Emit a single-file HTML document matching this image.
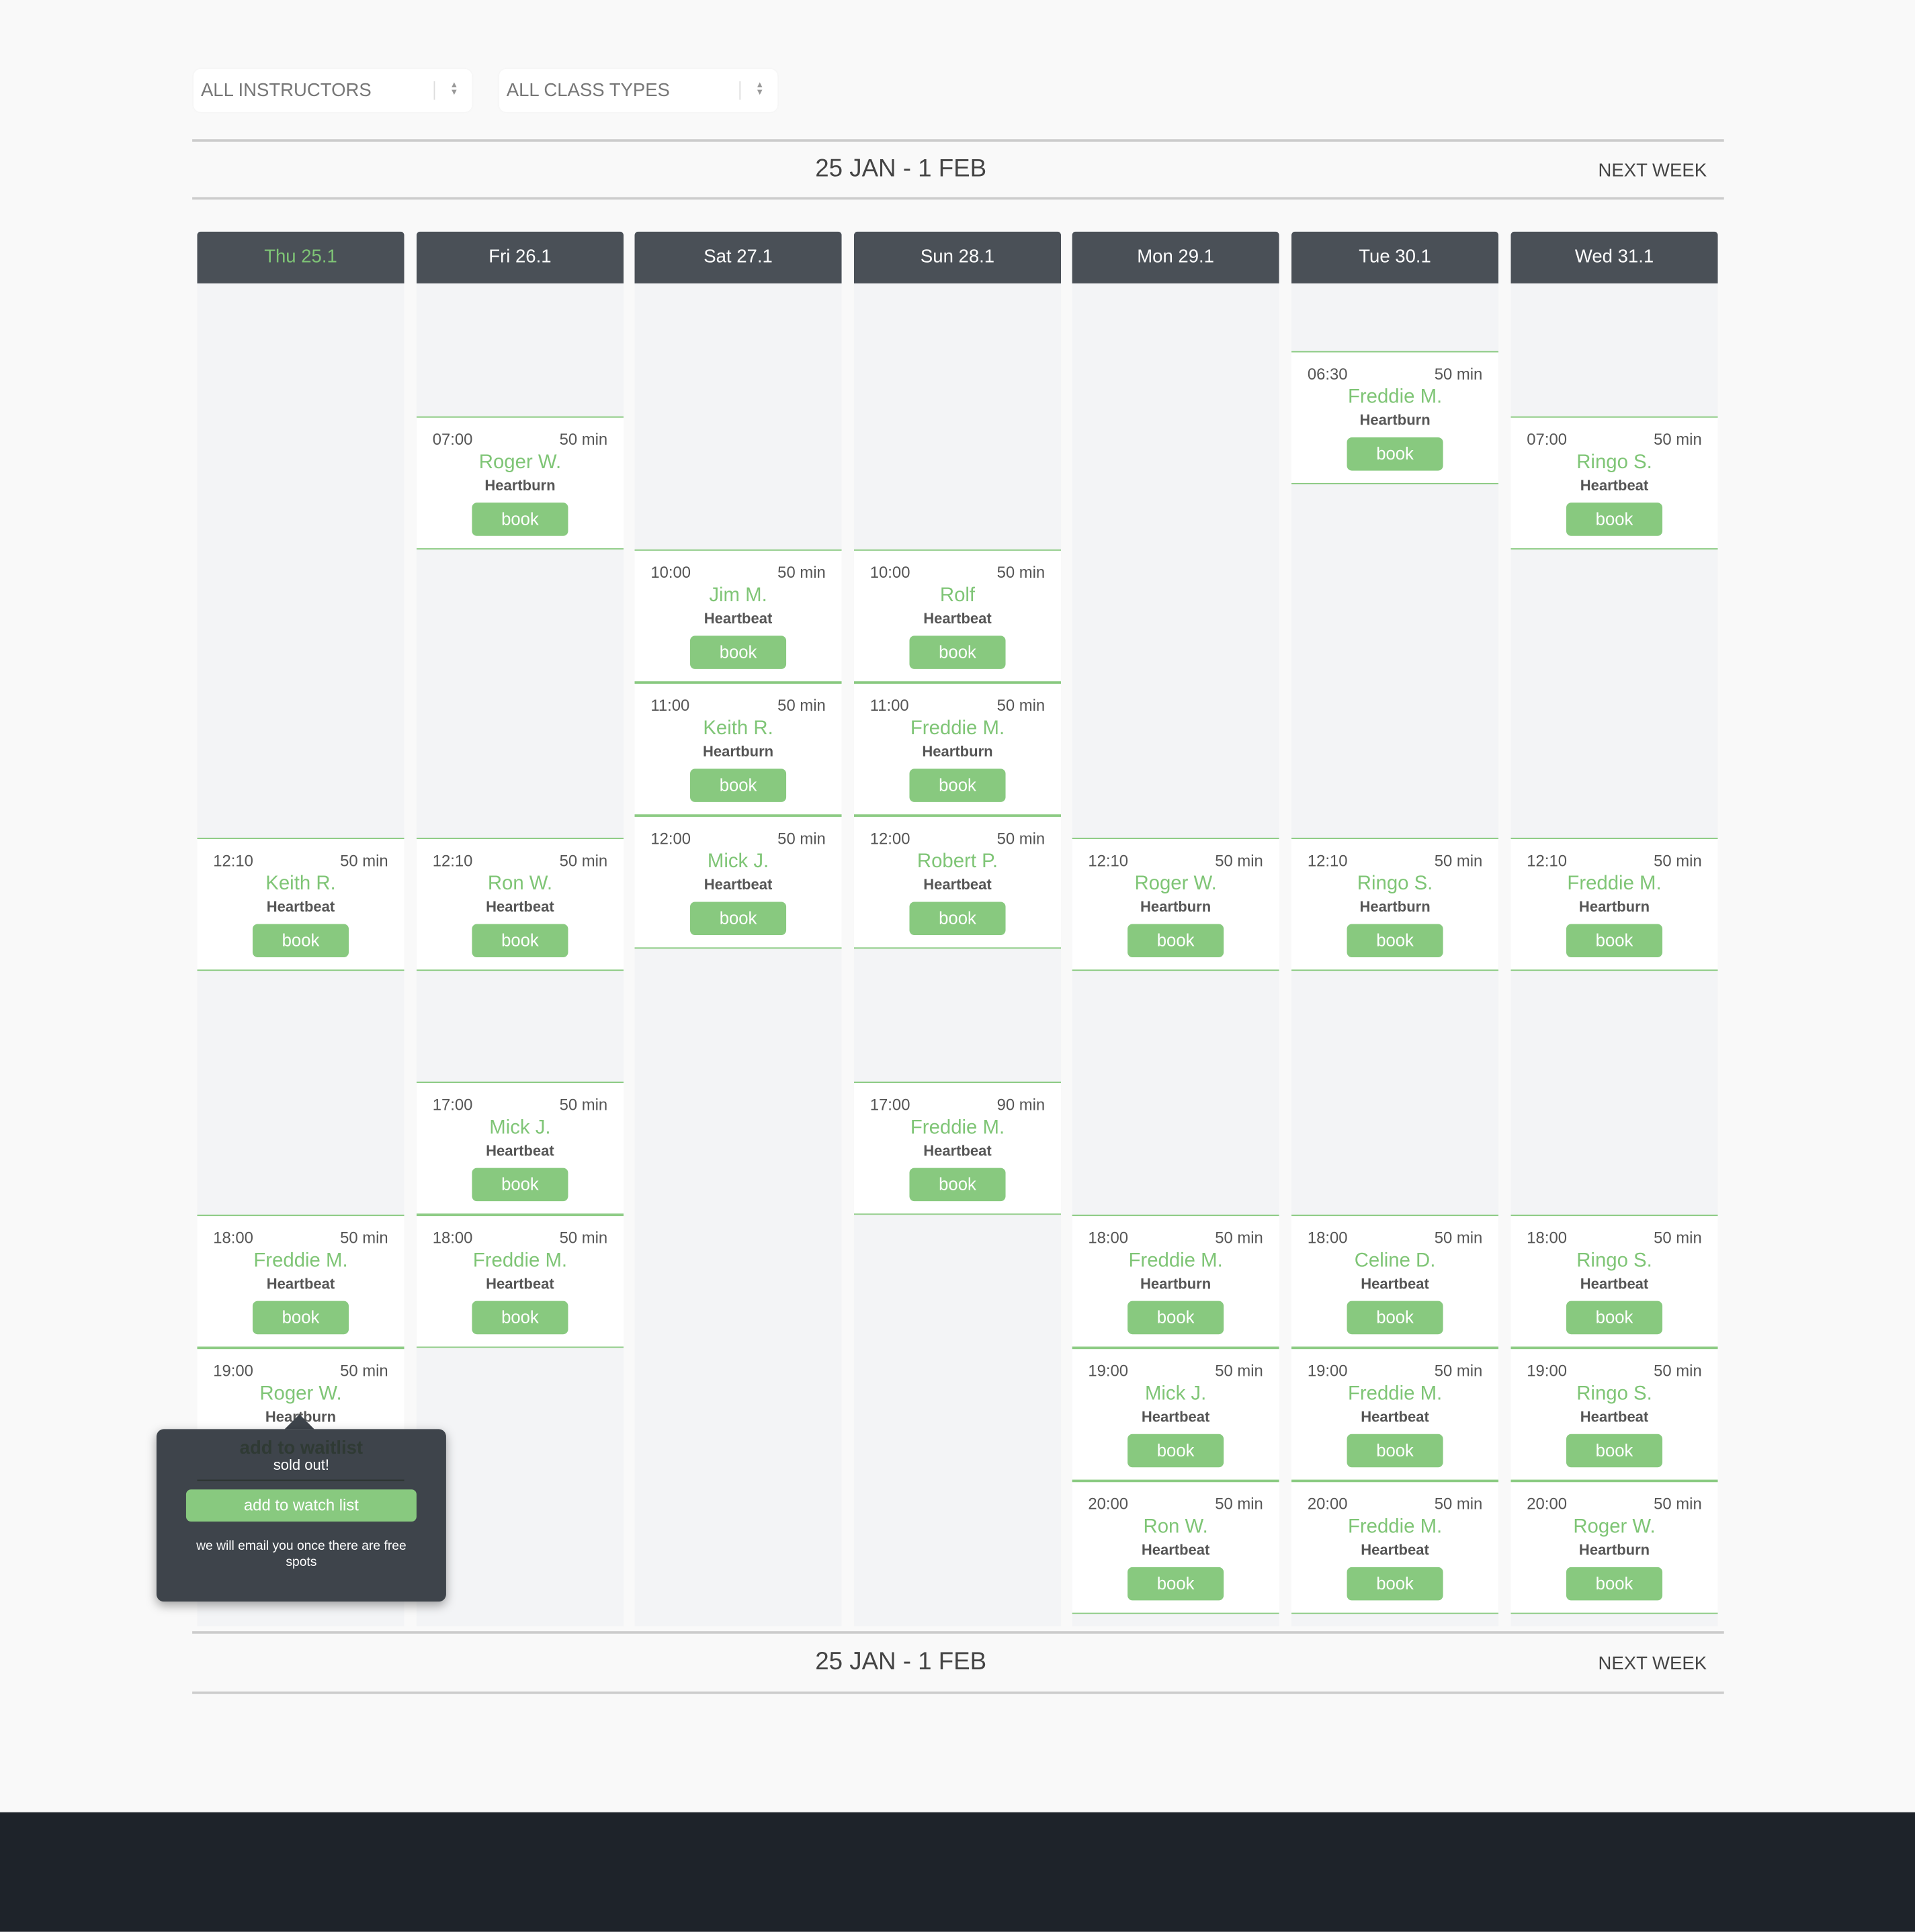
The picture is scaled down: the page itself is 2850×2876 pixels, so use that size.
<!DOCTYPE html>
<html><head><meta charset="utf-8">
<style>
html,body{margin:0;padding:0;width:2850px;height:2876px;overflow:hidden;background:#f9f9f9;font-family:"Liberation Sans",Arial,sans-serif}
#w{position:absolute;left:0;top:0;width:1554px;height:1568px;transform:scale(1.83398);transform-origin:0 0;}
.sel{position:absolute;top:56px;height:35px;width:226px;background:#fff;border-radius:6px;box-shadow:0 0 2px rgba(0,0,0,.04);}
.sel span{position:absolute;left:6px;top:9px;font-size:15px;color:#777;}
.sel i{position:absolute;right:30px;top:10px;width:1px;height:15px;background:#ddd}
.sel b{position:absolute;right:11px;top:11px;font-size:7px;line-height:6px;color:#999;font-weight:normal}
.hl{position:absolute;left:156px;width:1243px;height:1.5px;background:#ccc}
.dt{position:absolute;left:0;width:1462px;text-align:center;font-size:20px;color:#444}
.nw{position:absolute;right:169px;font-size:15px;color:#444}
.col{position:absolute;top:188px;width:168px;height:1132px;background:#f3f4f6;border-radius:3px 3px 0 0;overflow:hidden}
.col .h{height:42px;background:#4a5057;color:#fff;font-size:15px;text-align:center;line-height:42px}
.c{position:absolute;width:168px;height:106px;background:#fff;border-top:1.3px solid #88c97f;border-bottom:1.3px solid #88c97f}
.c .t{position:absolute;left:13px;top:10px;font-size:13px;color:#555}
.c .d{position:absolute;right:13px;top:10px;font-size:13px;color:#555}
.c .n{position:absolute;left:0;right:0;top:28px;text-align:center;font-size:16px;color:#7fc576}
.c .k{position:absolute;left:0;right:0;top:48px;text-align:center;font-size:12px;font-weight:bold;color:#555}
.c .b{position:absolute;left:45px;top:69px;width:78px;height:27px;border-radius:4px;background:#88c97f;color:#fff;font-size:14px;text-align:center;line-height:27px}
#foot{position:absolute;left:0;top:1471px;width:1554px;height:97px;background:#1e232a}
#tip{position:absolute;left:127px;top:1160px;width:235px;height:140px;background:#3e444b;border-radius:6px;box-shadow:0 3px 8px rgba(0,0,0,.35)}
#arr{position:absolute;left:231px;top:1148px;width:0;height:0;border-left:12px solid transparent;border-right:12px solid transparent;border-bottom:12px solid #3e444b}
</style></head><body><div id="w">
<div class="sel" style="left:157px"><span>ALL INSTRUCTORS</span><i></i><b>▲<br>▼</b></div>
<div class="sel" style="left:405px"><span>ALL CLASS TYPES</span><i></i><b>▲<br>▼</b></div>
<div class="hl" style="top:113px"></div><div class="hl" style="top:160px"></div>
<div class="dt" style="top:126px">25 JAN - 1 FEB</div><div class="nw" style="top:130px">NEXT WEEK</div>

<div class="col" style="left:160px"><div class="h" style="color:#7fc576">Thu 25.1</div>
<div class="c" style="top:492px"><span class="t">12:10</span><span class="d">50 min</span><div class="n">Keith R.</div><div class="k">Heartbeat</div><div class="b">book</div></div>
<div class="c" style="top:798px"><span class="t">18:00</span><span class="d">50 min</span><div class="n">Freddie M.</div><div class="k">Heartbeat</div><div class="b">book</div></div>
<div class="c" style="top:906px"><span class="t">19:00</span><span class="d">50 min</span><div class="n">Roger W.</div><div class="k">Heartburn</div></div>
</div>
<div class="col" style="left:338px"><div class="h">Fri 26.1</div>
<div class="c" style="top:150px"><span class="t">07:00</span><span class="d">50 min</span><div class="n">Roger W.</div><div class="k">Heartburn</div><div class="b">book</div></div>
<div class="c" style="top:492px"><span class="t">12:10</span><span class="d">50 min</span><div class="n">Ron W.</div><div class="k">Heartbeat</div><div class="b">book</div></div>
<div class="c" style="top:690px"><span class="t">17:00</span><span class="d">50 min</span><div class="n">Mick J.</div><div class="k">Heartbeat</div><div class="b">book</div></div>
<div class="c" style="top:798px"><span class="t">18:00</span><span class="d">50 min</span><div class="n">Freddie M.</div><div class="k">Heartbeat</div><div class="b">book</div></div>
</div>
<div class="col" style="left:515px"><div class="h">Sat 27.1</div>
<div class="c" style="top:258px"><span class="t">10:00</span><span class="d">50 min</span><div class="n">Jim M.</div><div class="k">Heartbeat</div><div class="b">book</div></div>
<div class="c" style="top:366px"><span class="t">11:00</span><span class="d">50 min</span><div class="n">Keith R.</div><div class="k">Heartburn</div><div class="b">book</div></div>
<div class="c" style="top:474px"><span class="t">12:00</span><span class="d">50 min</span><div class="n">Mick J.</div><div class="k">Heartbeat</div><div class="b">book</div></div>
</div>
<div class="col" style="left:693px"><div class="h">Sun 28.1</div>
<div class="c" style="top:258px"><span class="t">10:00</span><span class="d">50 min</span><div class="n">Rolf</div><div class="k">Heartbeat</div><div class="b">book</div></div>
<div class="c" style="top:366px"><span class="t">11:00</span><span class="d">50 min</span><div class="n">Freddie M.</div><div class="k">Heartburn</div><div class="b">book</div></div>
<div class="c" style="top:474px"><span class="t">12:00</span><span class="d">50 min</span><div class="n">Robert P.</div><div class="k">Heartbeat</div><div class="b">book</div></div>
<div class="c" style="top:690px"><span class="t">17:00</span><span class="d">90 min</span><div class="n">Freddie M.</div><div class="k">Heartbeat</div><div class="b">book</div></div>
</div>
<div class="col" style="left:870px"><div class="h">Mon 29.1</div>
<div class="c" style="top:492px"><span class="t">12:10</span><span class="d">50 min</span><div class="n">Roger W.</div><div class="k">Heartburn</div><div class="b">book</div></div>
<div class="c" style="top:798px"><span class="t">18:00</span><span class="d">50 min</span><div class="n">Freddie M.</div><div class="k">Heartburn</div><div class="b">book</div></div>
<div class="c" style="top:906px"><span class="t">19:00</span><span class="d">50 min</span><div class="n">Mick J.</div><div class="k">Heartbeat</div><div class="b">book</div></div>
<div class="c" style="top:1014px"><span class="t">20:00</span><span class="d">50 min</span><div class="n">Ron W.</div><div class="k">Heartbeat</div><div class="b">book</div></div>
</div>
<div class="col" style="left:1048px"><div class="h">Tue 30.1</div>
<div class="c" style="top:97px"><span class="t">06:30</span><span class="d">50 min</span><div class="n">Freddie M.</div><div class="k">Heartburn</div><div class="b">book</div></div>
<div class="c" style="top:492px"><span class="t">12:10</span><span class="d">50 min</span><div class="n">Ringo S.</div><div class="k">Heartburn</div><div class="b">book</div></div>
<div class="c" style="top:798px"><span class="t">18:00</span><span class="d">50 min</span><div class="n">Celine D.</div><div class="k">Heartbeat</div><div class="b">book</div></div>
<div class="c" style="top:906px"><span class="t">19:00</span><span class="d">50 min</span><div class="n">Freddie M.</div><div class="k">Heartbeat</div><div class="b">book</div></div>
<div class="c" style="top:1014px"><span class="t">20:00</span><span class="d">50 min</span><div class="n">Freddie M.</div><div class="k">Heartbeat</div><div class="b">book</div></div>
</div>
<div class="col" style="left:1226px"><div class="h">Wed 31.1</div>
<div class="c" style="top:150px"><span class="t">07:00</span><span class="d">50 min</span><div class="n">Ringo S.</div><div class="k">Heartbeat</div><div class="b">book</div></div>
<div class="c" style="top:492px"><span class="t">12:10</span><span class="d">50 min</span><div class="n">Freddie M.</div><div class="k">Heartburn</div><div class="b">book</div></div>
<div class="c" style="top:798px"><span class="t">18:00</span><span class="d">50 min</span><div class="n">Ringo S.</div><div class="k">Heartbeat</div><div class="b">book</div></div>
<div class="c" style="top:906px"><span class="t">19:00</span><span class="d">50 min</span><div class="n">Ringo S.</div><div class="k">Heartbeat</div><div class="b">book</div></div>
<div class="c" style="top:1014px"><span class="t">20:00</span><span class="d">50 min</span><div class="n">Roger W.</div><div class="k">Heartburn</div><div class="b">book</div></div>
</div>

<div class="hl" style="top:1324px"></div><div class="hl" style="top:1373px"></div>
<div class="dt" style="top:1338px">25 JAN - 1 FEB</div><div class="nw" style="top:1342px">NEXT WEEK</div>

<div id="arr"></div>
<div id="tip">
<div style="position:absolute;left:0;right:0;top:7px;text-align:center;font-size:15px;font-weight:bold;color:#2f3a34">add to waitlist</div>
<div style="position:absolute;left:0;right:0;top:22px;text-align:center;font-size:12px;color:#fff">sold out!</div>
<div style="position:absolute;left:33px;width:168px;top:41px;height:1px;background:#2a332e"></div>
<div style="position:absolute;left:24px;width:187px;top:49px;height:26px;background:#88c97f;border-radius:4px;color:#fff;font-size:13px;text-align:center;line-height:26px">add to watch list</div>
<div style="position:absolute;left:30px;right:30px;top:89px;text-align:center;font-size:10.5px;line-height:13px;color:#fff">we will email you once there are free spots</div>
</div>
<div id="foot"></div>
</div></body></html>
